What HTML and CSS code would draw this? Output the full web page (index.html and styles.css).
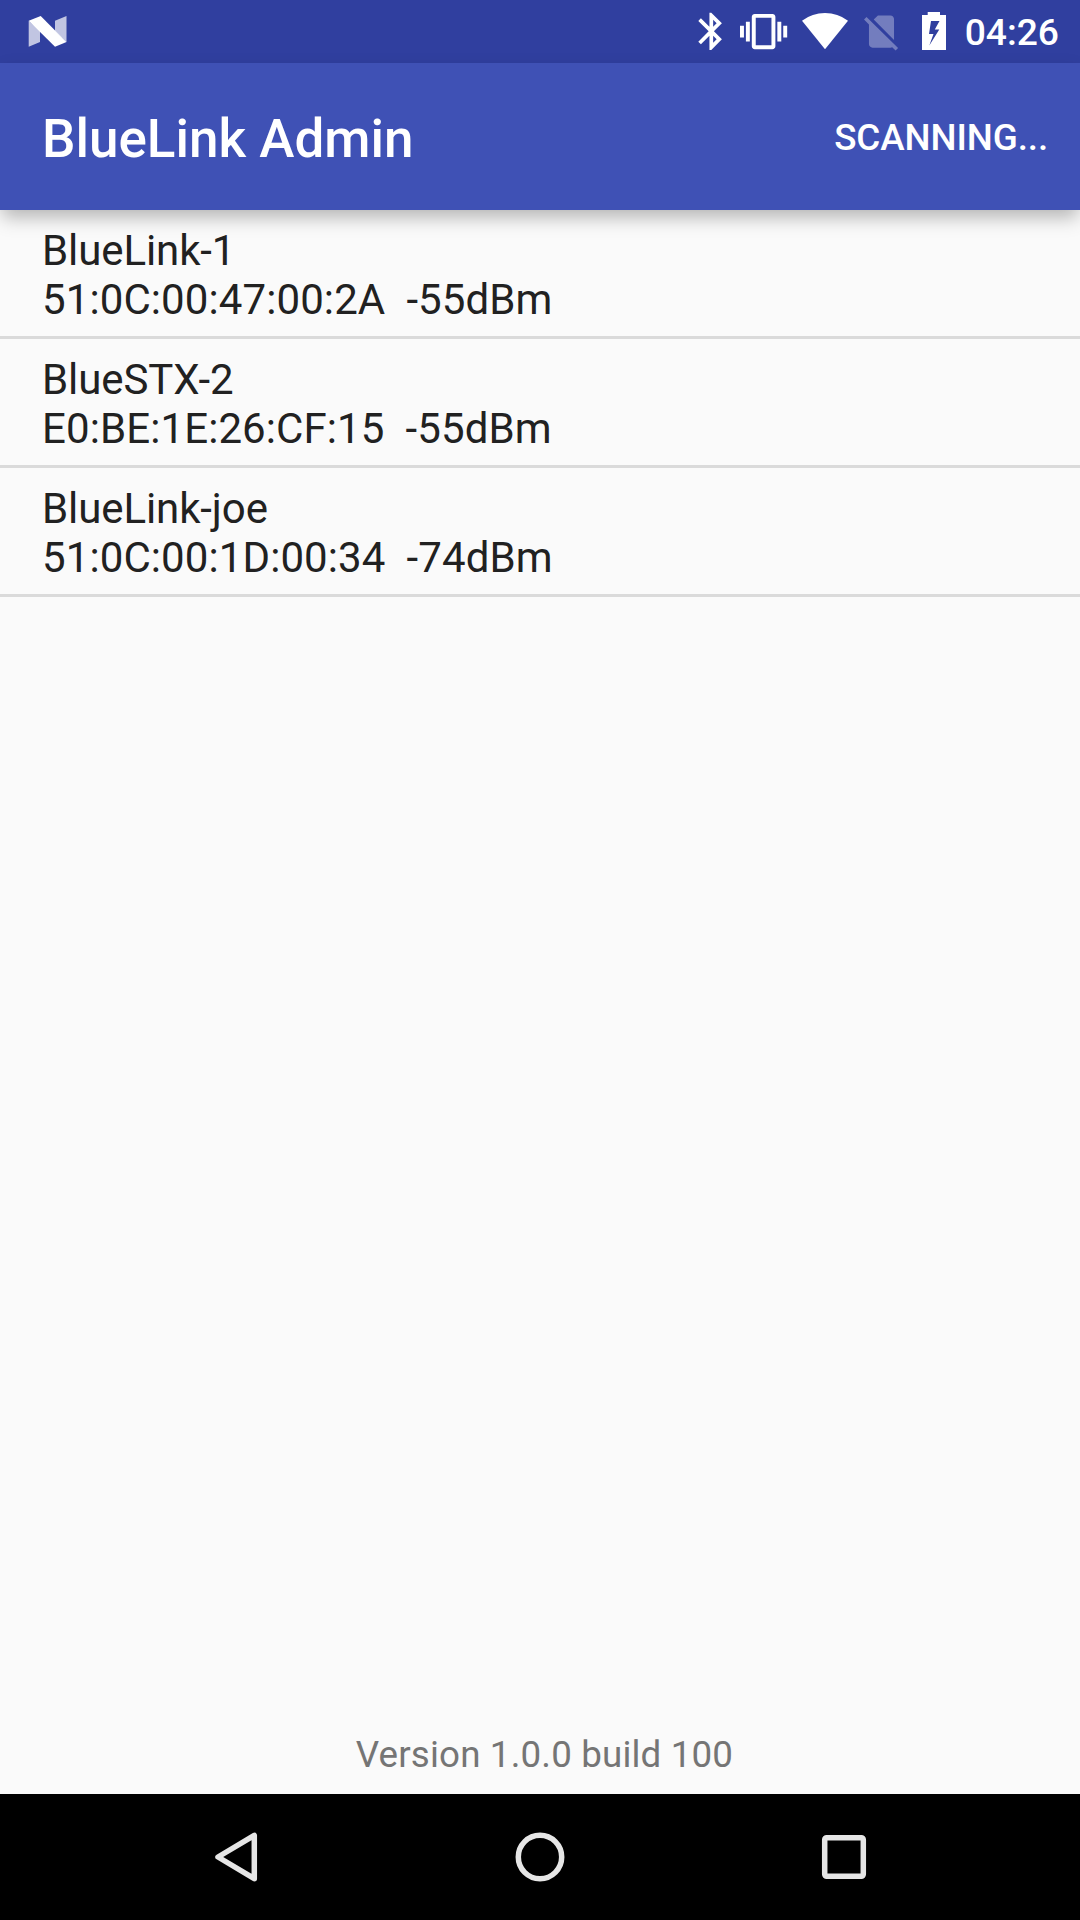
FILE: index.html
```
<!DOCTYPE html>
<html lang="en">
<head>
    <meta charset="UTF-8">
    <meta name="viewport" content="width=device-width, initial-scale=1.0">
    <title>BlueLink Admin</title>
    <link rel="stylesheet" href="styles.css">
</head>
<body>
    <div class="screen">
        <div class="status-bar">
            <svg class="icon-n" viewBox="0 0 39 63">
                <path fill-opacity=".7" d="M.7 20.7v26L12 42V31zM27 20.7L38.5 16v26L27 31z"/>
                <path d="M.7 20.7L12.7 16l25.8 26L27 46.7z"/>
            </svg>
            <div class="status-icons">
                <svg class="icon-bluetooth" viewBox="0 0 24 24">
                    <path d="M17.71 7.71L12 2h-1v7.59L6.41 5 5 6.41 10.59 12 5 17.59 6.41 19 11 14.41V22h1l5.71-5.71-4.3-4.29 4.3-4.29zM13 5.83l1.88 1.88L13 9.59V5.83zm1.88 10.46L13 18.17v-3.76l1.88 1.88z"/>
                </svg>
                <svg class="icon-vibrate" viewBox="0 0 24 24">
                    <path d="M0 15h2V9H0v6zm3 2h2V7H3v10zm19-8v6h2V9h-2zm-3 8h2V7h-2v10zM16.5 3h-9C6.67 3 6 3.67 6 4.5v15c0 .83.67 1.5 1.5 1.5h9c.83 0 1.5-.67 1.5-1.5v-15c0-.83-.67-1.5-1.5-1.5zM16 19H8V5h8v14z"/>
                </svg>
                <svg class="icon-wifi" viewBox="0 0 46 63">
                    <path d="M23 49.2L0 20.7a38.2 38.2 0 0 1 46 0z"/>
                </svg>
                <svg class="icon-no-sim" viewBox="0 0 24 24">
                    <path d="M18.99 5c0-1.1-.89-2-1.99-2h-7L7.66 5.34 19 16.68 18.99 5zM3.65 3.88L2.24 5.29 5 8.05V19c0 1.1.9 2 2 2h10.01c.35 0 .67-.1.96-.26l1.88 1.88 1.41-1.41L3.65 3.88z"/>
                </svg>
                <svg class="icon-battery" viewBox="0 0 24 63">
                    <path fill-rule="evenodd" d="M0 15h5.700v-3H18v3h6v35H0zM9 21L7 34h4.500L7.300 45.500 17.300 29.500H12.800l4.700-8.500z"/>
                </svg>
            </div>
            <span class="clock">04:26</span>
        </div>

        <div class="app-bar">
            <h1>BlueLink Admin</h1>
            <button id="scan">SCANNING...</button>
        </div>

        <ul class="device-list">
            <li>
                <div class="name">BlueLink-1</div>
                <div class="address">51:0C:00:47:00:2A&nbsp; -55dBm</div>
            </li>
            <li>
                <div class="name">BlueSTX-2</div>
                <div class="address">E0:BE:1E:26:CF:15&nbsp; -55dBm</div>
            </li>
            <li>
                <div class="name">BlueLink-joe</div>
                <div class="address">51:0C:00:1D:00:34&nbsp; -74dBm</div>
            </li>
        </ul>

        <div class="version">Version 1.0.0 build 100</div>

        <div class="nav-bar">
            <svg viewBox="0 0 60 60">
                <path d="M12 30L48.300 8.300v43.400z"/>
            </svg>
            <svg viewBox="0 0 60 60">
                <circle cx="30" cy="30" r="21.700"/>
            </svg>
            <svg viewBox="0 0 60 60">
                <rect x="10.700" y="10.700" width="38.600" height="38.600" rx="2"/>
            </svg>
        </div>
    </div>
</body>
</html>
```
FILE: styles.css
```
body {
    margin: 0;
    font-family: Roboto, sans-serif;
    background-color: #fafafa;
    color: #212121;
}
.screen {
    display: flex;
    flex-direction: column;
    height: 1920px;
}
.status-bar {
    display: flex;
    align-items: center;
    height: 63px;
    padding: 0 21px 0 28px;
    background-color: #303f9f;
    color: white;
}
.status-bar svg {
    display: block;
    fill: white;
}
.status-icons {
    display: flex;
    align-items: center;
    margin-left: auto;
}
.icon-n {
    width: 39px;
    height: 63px;
}
.icon-bluetooth {
    width: 44.6px;
    height: 44.6px;
}
.icon-vibrate {
    width: 47.2px;
    height: 47.2px;
    margin-left: 7px;
}
.icon-wifi {
    width: 46px;
    height: 63px;
    margin-left: 14px;
}
.icon-no-sim {
    width: 43px;
    height: 43px;
    margin-left: 12px;
    opacity: .32;
}
.icon-battery {
    width: 24px;
    height: 63px;
    margin-left: 19px;
}
.clock {
    margin-left: 19px;
    padding-top: 2px;
    font-size: 37.2px;
    font-weight: 500;
    line-height: 61px;
}
.app-bar {
    display: flex;
    align-items: center;
    justify-content: space-between;
    height: 147px;
    padding: 0 32px 0 42px;
    background-color: #3f51b5;
    box-shadow: 0 9px 18px -2px rgba(0,0,0,0.29);
    position: relative;
    z-index: 1;
}
.app-bar h1 {
    margin: 0;
    padding-top: 4px;
    color: white;
    font-size: 53px;
    font-weight: 500;
}
.app-bar button {
    padding: 1px 0 0;
    border: none;
    background: none;
    color: white;
    font-family: inherit;
    font-size: 36.75px;
    font-weight: 500;
    letter-spacing: -0.1px;
}
.device-list {
    flex: 1;
    margin: 0;
    padding: 0;
    list-style: none;
    font-size: 42px;
    line-height: 49px;
}
.device-list li {
    padding: 16px 42px 12px;
    border-bottom: 3px solid #dadada;
}
.name {
    letter-spacing: -0.1px;
}
.address {
    letter-spacing: 0.1px;
}
.version {
    padding: 0 0 18px 9px;
    color: #757575;
    font-size: 36.75px;
    line-height: 43px;
    letter-spacing: 0.15px;
    text-align: center;
}
.nav-bar {
    display: flex;
    align-items: center;
    justify-content: center;
    gap: 244px;
    height: 126px;
    background-color: black;
}
.nav-bar svg {
    width: 60px;
    height: 60px;
    fill: none;
    stroke: #e6e6e6;
    stroke-width: 5.5;
    stroke-linejoin: round;
}
```
